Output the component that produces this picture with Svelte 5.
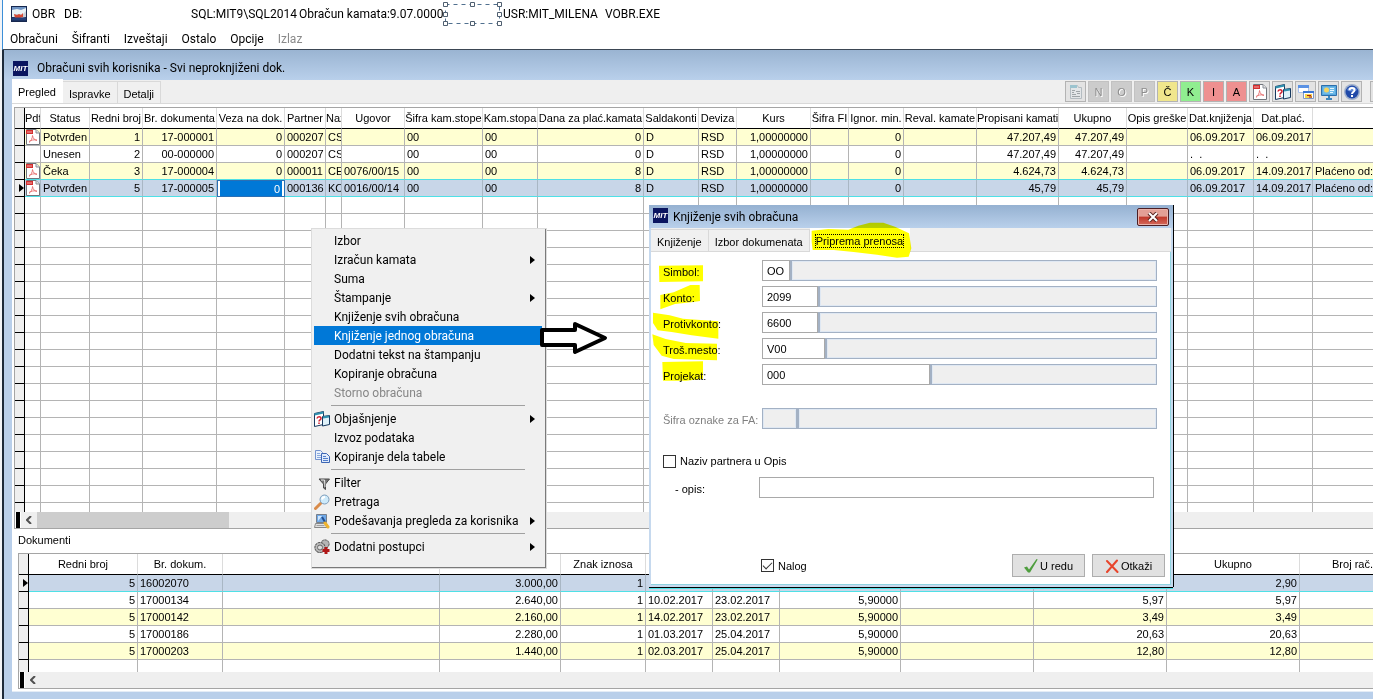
<script lang="ts">
  type Align = 'left' | 'right' | 'center';

  interface Column {
    label: string;
    width: number | null;
    align?: Align;
  }

  interface MenuItem {
    label?: string;
    icon?: string;
    submenu?: boolean;
    disabled?: boolean;
    active?: boolean;
    separator?: boolean;
  }

  const mainMenu = ['Obračuni', 'Šifranti', 'Izveštaji', 'Ostalo', 'Opcije'];

  // A null width takes what is left of the window
  const columns: Column[] = [
    { label: 'Pdf', width: 16 },
    { label: 'Status', width: 49 },
    { label: 'Redni broj', width: 53, align: 'right' },
    { label: 'Br. dokumenta', width: 74, align: 'right' },
    { label: 'Veza na dok.', width: 68, align: 'right' },
    { label: 'Partner', width: 41 },
    { label: 'Naz', width: 16 },
    { label: 'Ugovor', width: 63 },
    { label: 'Šifra kam.stope', width: 78 },
    { label: 'Kam.stopa', width: 55 },
    { label: 'Dana za plać.kamata', width: 106, align: 'right' },
    { label: 'Saldakonti', width: 55 },
    { label: 'Deviza', width: 38 },
    { label: 'Kurs', width: 74, align: 'right' },
    { label: 'Šifra FI', width: 38 },
    { label: 'Ignor. min.', width: 55, align: 'right' },
    { label: 'Reval. kamate', width: 73, align: 'right' },
    { label: 'Propisani kamati', width: 82, align: 'right' },
    { label: 'Ukupno', width: 68, align: 'right' },
    { label: 'Opis greške', width: 61 },
    { label: 'Dat.knjiženja', width: 66 },
    { label: 'Dat.plać.', width: 59 },
    { label: '', width: null }
  ];

  const rows = [
    ['pdf', 'Potvrđen', '1', '17-000001', '0', '000207', 'CS', '', '00', '00', '0', 'D', 'RSD', '1,00000000', '', '0', '', '47.207,49', '47.207,49', '', '06.09.2017', '06.09.2017', ''],
    ['', 'Unesen', '2', '00-000000', '0', '000207', 'CS', '', '00', '00', '0', 'D', 'RSD', '1,00000000', '', '0', '', '47.207,49', '47.207,49', '', '.  .', '.  .', ''],
    ['pdf', 'Čeka', '3', '17-000004', '0', '000011', 'CE', '0076/00/15', '00', '00', '8', 'D', 'RSD', '1,00000000', '', '0', '', '4.624,73', '4.624,73', '', '06.09.2017', '14.09.2017', 'Plaćeno od:'],
    ['pdf', 'Potvrđen', '5', '17-000005', '0', '000136', 'KO', '0016/00/14', '00', '00', '8', 'D', 'RSD', '1,00000000', '', '0', '', '45,79', '45,79', '', '06.09.2017', '14.09.2017', 'Plaćeno od:']
  ];

  const docColumns: Column[] = [
    { label: 'Redni broj', width: 109, align: 'right' },
    { label: 'Br. dokum.', width: 85 },
    { label: '', width: 217 },
    { label: '', width: 121, align: 'right' },
    { label: 'Znak iznosa', width: 85, align: 'right' },
    { label: '', width: 67 },
    { label: '', width: 67 },
    { label: '', width: 121, align: 'right' },
    { label: '', width: 133 },
    { label: '', width: 133, align: 'right' },
    { label: 'Ukupno', width: 133, align: 'right' },
    { label: 'Broj rač.', width: null }
  ];

  const docRows = [
    ['5', '16002070', '', '3.000,00', '1', '', '', '', '', '', '2,90', ''],
    ['5', '17000134', '', '2.640,00', '1', '10.02.2017', '23.02.2017', '5,90000', '', '5,97', '5,97', ''],
    ['5', '17000142', '', '2.160,00', '1', '14.02.2017', '23.02.2017', '5,90000', '', '3,49', '3,49', ''],
    ['5', '17000186', '', '2.280,00', '1', '01.03.2017', '25.04.2017', '5,90000', '', '20,63', '20,63', ''],
    ['5', '17000203', '', '1.440,00', '1', '02.03.2017', '25.04.2017', '5,90000', '', '12,80', '12,80', '']
  ];

  const tools = [
    { icon: 'form' },
    { text: 'N', tone: 'off' },
    { text: 'O', tone: 'off' },
    { text: 'P', tone: 'off' },
    { text: 'Č', tone: 'yellow' },
    { text: 'K', tone: 'green' },
    { text: 'I', tone: 'red' },
    { text: 'A', tone: 'red' },
    { icon: 'pdf' },
    { icon: 'explain' },
    { icon: 'windows' },
    { icon: 'monitor' },
    { icon: 'help' }
  ];

  const contextMenu: MenuItem[] = [
    { label: 'Izbor' },
    { label: 'Izračun kamata', submenu: true },
    { label: 'Suma' },
    { label: 'Štampanje', submenu: true },
    { label: 'Knjiženje svih obračuna' },
    { label: 'Knjiženje jednog obračuna', active: true },
    { label: 'Dodatni tekst na štampanju' },
    { label: 'Kopiranje obračuna' },
    { label: 'Storno obračuna', disabled: true },
    { separator: true },
    { label: 'Objašnjenje', icon: 'explain', submenu: true },
    { label: 'Izvoz podataka' },
    { label: 'Kopiranje dela tabele', icon: 'copy' },
    { separator: true },
    { label: 'Filter', icon: 'filter' },
    { label: 'Pretraga', icon: 'search' },
    { label: 'Podešavanja pregleda za korisnika', icon: 'settings', submenu: true },
    { separator: true },
    { label: 'Dodatni postupci', icon: 'gears', submenu: true }
  ];

  let fields = $state([
    { id: 'simbol', label: 'Simbol:', value: 'OO', width: 28, disabled: false },
    { id: 'konto', label: 'Konto:', value: '2099', width: 56, disabled: false },
    { id: 'protivkonto', label: 'Protivkonto:', value: '6600', width: 56, disabled: false },
    { id: 'mesto', label: 'Troš.mesto:', value: 'V00', width: 63, disabled: false },
    { id: 'projekat', label: 'Projekat:', value: '000', width: 168, disabled: false },
    { id: 'oznaka', label: 'Šifra oznake za FA:', value: '', width: 35, disabled: true }
  ]);

  let veza = $state('0');
  let nazivPartnera = $state(false);
  let opis = $state('');
  let nalog = $state(true);
</script>

{#snippet icon(name: string)}
  <svg class="icon" viewBox="0 0 16 16" width="16" height="16" aria-hidden="true">
    {#if name === 'pdf'}
      <path d="M1.500.500h9.500l3.500 3.500v11.500h-13z" fill="#fff" stroke="#70757c" />
      <path d="M11 .5v3.500h3.500" fill="#e4e4e4" stroke="#8a8f96" />
      <path d="M1 1h7v4H1z" fill="#d32f2f" />
      <path d="M2 3h5" stroke="#f2a9a9" />
      <path d="M4 13.500c2-1.500 3.500-4.500 3.500-7M7.500 6.500c.5 3 2 4.500 4.500 5M4 12.500c2-1.500 5-2 8-1.500" fill="none" stroke="#e87878" />
    {:else if name === 'explain'}
      <path d="M.5 2.500l9-2v13l-9 2z" fill="#fff" stroke="#17395f" />
      <path d="M.5 3.500l9-2" stroke="#2f8fae" stroke-width="2" />
      <path d="M8.500 5.500l7-1v9l-7 1.500z" fill="#dff2fa" stroke="#17395f" />
      <path d="M9 6.500l6-1" stroke="#2f8fae" stroke-width="2" />
      <path d="M3 7.500c.3-2.500 4-2.500 4 0 0 1.400-2 1.300-2 3M5 11.500V13" fill="none" stroke="#d02030" stroke-width="1.500" />
    {:else if name === 'form'}
      <path d="M2.500 1.500h7l1 2h3v11h-11z" fill="#e3e6e8" stroke="#b4bcc1" />
      <path d="M2 1h7v3H2z" fill="#9cc4cf" />
      <path d="M4 6.500h3M4 8.500h2M4 10.500h4M8 7.500h4M9 9.500h3M4 12.500h8" stroke="#9fa5a8" />
    {:else if name === 'windows'}
      <path d="M.5 1.500h10v7H.5z" fill="#fff" stroke="#a9c0ea" />
      <path d="M0 2.500h11" stroke="#5b92e4" stroke-width="3" />
      <path d="M5.500 7.500h10v7h-10z" fill="#fff" stroke="#8298c4" />
      <path d="M5 8h11" stroke="#3b76d4" stroke-width="2" />
      <path d="M7 10h7v4H7z" fill="#f6d54a" />
      <path d="M9 11.500h4M11 13h3" stroke="#a32020" />
    {:else if name === 'monitor'}
      <path d="M.5 1.500h15v10H.5z" fill="#58a9df" stroke="#2c6fab" />
      <path d="M2 3h12v7H2z" fill="#6fbbe8" />
      <circle cx="5.500" cy="6" r="2.500" fill="#f5d35e" />
      <path d="M9 4.500h4M9 6.500h4M9 8.500h3" stroke="#e6f5fd" />
      <path d="M8 12v3M5 15h6" stroke="#3c85bd" stroke-width="2" />
    {:else if name === 'help'}
      <circle cx="8" cy="8" r="8" fill="#9fb0cc" />
      <circle cx="8" cy="8" r="6.500" fill="#2049a8" />
      <path d="M3 6a5.500 5.500 0 0 1 10 0c-3 2-7 2-10 0z" fill="#5d86d6" />
      <path d="M5.500 6.300c0-3 5-3 5 0 0 1.700-2.500 1.700-2.500 3.700M8 11v2" fill="none" stroke="#fff" stroke-width="2" />
    {:else if name === 'copy'}
      <path d="M1.500 1.500h5l2 2v7h-7z" fill="#e9f1fc" stroke="#7594cf" />
      <path d="M3 4.500h3M3 6.500h4M3 8.500h4" stroke="#8aa9dd" />
      <path d="M7.500 4.500h5l3 3v6h-8z" fill="#dfeafb" stroke="#3d66b4" />
      <path d="M9 7.500h3M9 9.500h5M9 11.500h5" stroke="#527ecb" />
    {:else if name === 'filter'}
      <path d="M5 4h10.500l-4 5v5.500l-2-1.500V9z" fill="#777" stroke="#494949" />
      <path d="M7 5h3.500l.5 7" fill="none" stroke="#e6e6e6" />
    {:else if name === 'search'}
      <path d="M1.500 14.500l5-5" stroke="#d98b4a" stroke-width="3" stroke-linecap="round" />
      <circle cx="10.500" cy="5.500" r="4.500" fill="#cdeafa" stroke="#7d9cba" />
      <path d="M8 5.500a3 3 0 0 1 3-2.500" fill="none" stroke="#fff" stroke-width="2" />
    {:else if name === 'settings'}
      <path d="M2.500 1.500h10v8h-10z" fill="#6ea8e8" stroke="#777f8a" />
      <path d="M4 3h4L4 8z" fill="#cfe7ff" />
      <path d="M8 4l3 5" stroke="#234f90" stroke-width="2" />
      <path d="M1.500 10.500h11l1.500 4H.5z" fill="#e0e0e0" stroke="#888" />
      <path d="M2.500 12.500h8" stroke="#a0a0a0" />
      <path d="M11 10l3 4" stroke="#eeb32f" stroke-width="3" stroke-linecap="round" />
    {:else if name === 'gears'}
      <circle cx="11" cy="5" r="4.500" fill="#909090" />
      <circle cx="11" cy="5" r="4" fill="#b5b5b5" stroke="#666" stroke-dasharray="2 1" />
      <circle cx="6" cy="8.500" r="5.500" fill="#8a8a8a" />
      <circle cx="6" cy="8.500" r="5" fill="#b9b9b9" stroke="#555" stroke-dasharray="2 1" />
      <circle cx="6" cy="8.500" r="2.500" fill="#dcdcdc" stroke="#666" />
      <path d="M12 8v7M8.500 11.500h7" stroke="#b01717" stroke-width="3" />
    {/if}
  </svg>
{/snippet}

{#snippet grid(cols: Column[], data: string[][], selected: number, blanks: number)}
  <table class="grid">
    <colgroup>
      <col class="marker-col" />
      {#each cols as col}
        <col style={col.width ? `width: ${col.width}px` : ''} />
      {/each}
    </colgroup>
    <thead>
      <tr>
        <th class="marker"></th>
        {#each cols as col}
          <th class:last={col.width === null}>{col.label}</th>
        {/each}
      </tr>
    </thead>
    <tbody>
      {#each data as row, i}
        <tr class:striped={i % 2 === 0} class:selected={i === selected}>
          <td class="marker">
            {#if i === selected}
              <svg viewBox="0 0 5 8" width="5" height="8" aria-hidden="true"><path d="M0 0l5 4-5 4z" /></svg>
            {/if}
          </td>
          {#each row as value, c}
            <td class={cols[c].align ?? 'left'} class:pdf={cols[c].label === 'Pdf'} class:edit={i === selected && cols[c].label === 'Veza na dok.'}>
              {#if value === 'pdf'}
                {@render icon('pdf')}
              {:else if i === selected && cols[c].label === 'Veza na dok.'}
                <input aria-label="Veza na dok." bind:value={veza} />
              {:else}
                {value}
              {/if}
            </td>
          {/each}
        </tr>
      {/each}
      {#each Array(blanks + 1) as _, i}
        <tr class:stub={i === blanks}>
          <td class="marker"></td>
          {#each cols as _col}
            <td></td>
          {/each}
        </tr>
      {/each}
    </tbody>
  </table>
{/snippet}

<div class="app">
  <header class="app-head">
    <div class="caption">
      <svg class="app-icon" viewBox="0 0 16 16" width="16" height="16" aria-hidden="true">
        <path d="M0 0h16v16H0z" fill="#17284f" />
        <path d="M1 1h14v4H1z" fill="#6f94c4" />
        <path d="M1 4l5-1 4 1 5-2v9H1z" fill="#e9f1f6" />
        <path d="M3 8h9l3-3v6l-4 1H4z" fill="#c9ced6" />
        <path d="M3 8l3 1 2-1 2 1 2-2v4l-3 1H4z" fill="#d84a35" />
        <path d="M1 13h14" stroke="#24407a" stroke-width="3" />
      </svg>
      <span class="cap-name">OBR</span>
      <span class="cap-db">DB:</span>
      <span class="cap-sql">SQL:MIT9\SQL2014</span>
      <span class="cap-version">Obračun kamata:9.07.0000</span>
      <svg class="placeholder" viewBox="0 0 60 24" width="60" height="24" aria-hidden="true">
        <path d="M2.500 2.500h54v19h-54z" fill="none" stroke="#51708f" stroke-dasharray="4 4" />
        <g fill="#fff" stroke="#4f5f70">
          <path d="M.5.500h4v4h-4zM27.500.500h4v4h-4zM54.500.500h4v4h-4z" />
          <path d="M.5 10.500h4v4h-4zM54.500 10.500h4v4h-4z" />
          <path d="M.5 19.500h4v4h-4zM27.500 19.500h4v4h-4zM54.500 19.500h4v4h-4z" />
        </g>
      </svg>
      <span class="cap-user">USR:MIT_MILENA</span>
      <span>VOBR.EXE</span>
    </div>
    <nav class="menubar">
      {#each mainMenu as entry}
        <button>{entry}</button>
      {/each}
      <button disabled>Izlaz</button>
    </nav>
  </header>

  <main class="child">
    <div class="child-title">
      <span class="mit">MIT</span>
      <h1>Obračuni svih korisnika - Svi neproknjiženi dok.</h1>
    </div>

    <div class="panel">
      <div class="strip">
        <div class="tabs">
          <button class="tab current">Pregled</button>
          <button class="tab">Ispravke</button>
          <button class="tab">Detalji</button>
        </div>
        <div class="tools">
          {#each tools as tool}
            <button class="tool {tool.tone ?? ''}" aria-label={tool.text ?? tool.icon}>
              {#if tool.icon}{@render icon(tool.icon)}{:else}{tool.text}{/if}
            </button>
          {/each}
          <button class="tool cut" aria-label="more"></button>
        </div>
      </div>

      <section class="frame">
        {@render grid(columns, rows, 3, 18)}
        <div class="scroll">
          <span class="split"></span>
          <button class="scroll-left" aria-label="scroll left">
            <svg viewBox="0 0 6 8" width="6" height="8" aria-hidden="true"><path d="M5 0L1 4l4 4" fill="none" stroke="#505050" stroke-width="2" /></svg>
          </button>
          <span class="thumb"></span>
        </div>
      </section>

      <h2>Dokumenti</h2>

      <section class="frame docs">
        {@render grid(docColumns, docRows, 0, 0)}
        <div class="scroll">
          <span class="split"></span>
          <button class="scroll-left" aria-label="scroll left">
            <svg viewBox="0 0 6 8" width="6" height="8" aria-hidden="true"><path d="M5 0L1 4l4 4" fill="none" stroke="#505050" stroke-width="2" /></svg>
          </button>
        </div>
      </section>
    </div>
  </main>

  <div class="context" role="menu">
    {#each contextMenu as item}
      {#if item.separator}
        <hr />
      {:else}
        <button class="item" class:active={item.active} role="menuitem" disabled={item.disabled}>
          <span class="item-icon">{#if item.icon}{@render icon(item.icon)}{/if}</span>
          <span class="item-label">{item.label}</span>
          {#if item.submenu}
            <svg viewBox="0 0 5 8" width="5" height="8" aria-hidden="true"><path d="M0 0l5 4-5 4z" /></svg>
          {/if}
        </button>
      {/if}
    {/each}
  </div>

  <svg class="pointer" viewBox="0 0 70 34" width="70" height="34" aria-hidden="true">
    <path d="M2 9h33V3l30 14-30 14v-7H2z" fill="#fff" stroke="#000" stroke-width="4" stroke-linejoin="round" />
  </svg>

  <div class="dialog" role="dialog" aria-labelledby="dialog-title">
    <div class="dialog-title">
      <span class="mit">MIT</span>
      <span id="dialog-title">Knjiženje svih obračuna</span>
      <button class="close" aria-label="close">
        <svg viewBox="0 0 12 10" width="12" height="10" aria-hidden="true">
          <path d="M2 1l8 8M10 1L2 9" stroke="#5b2420" stroke-width="4" />
          <path d="M2 1l8 8M10 1L2 9" stroke="#fff" stroke-width="2" />
        </svg>
      </button>
    </div>
    <div class="dialog-tabs">
      <button class="tab">Knjiženje</button>
      <button class="tab">Izbor dokumenata</button>
      <button class="tab current"><span>Priprema prenosa</span></button>
    </div>

    <form class="dialog-body">
      {#each fields as field}
        <div class="field" class:disabled={field.disabled}>
          <label for={field.id}>{field.label}</label>
          <input id={field.id} class="code" style="width: {field.width}px" disabled={field.disabled} bind:value={field.value} />
          <input class="name" aria-label="{field.label} naziv" readonly />
        </div>
      {/each}

      <label class="check naziv"><input type="checkbox" bind:checked={nazivPartnera} />Naziv partnera u Opis</label>
      <div class="opis">
        <label for="opis">- opis:</label>
        <input id="opis" bind:value={opis} />
      </div>

      <div class="actions">
        <label class="check"><input type="checkbox" bind:checked={nalog} />Nalog</label>
        <div class="buttons">
          <button type="button">
            <svg viewBox="0 0 14 14" width="14" height="14" aria-hidden="true"><path d="M0 8.500l3-1 2 3L12.500 0l1.200.5L6 13.500H4z" fill="#4f9e3f" /></svg>
            U redu
          </button>
          <button type="button">
            <svg viewBox="0 0 14 14" width="14" height="14" aria-hidden="true"><path d="M2 2l10.500 11M12 1.500L2 13" fill="none" stroke="#e8452c" stroke-width="2" stroke-linecap="round" /></svg>
            Otkaži
          </button>
        </div>
      </div>
    </form>

    <svg class="marks" viewBox="12 15 810 555" width="270" height="185" aria-hidden="true">
      <g fill="#ff0">
        <path d="M500 92l50-5 60 2 30-12 35-9h40l35 12 42 20 7 45-8 25-35 3-60-9-70-8-60-6h-63l-3-25z" />
        <path d="M42 197l132-1v48l-131 2z" />
        <path d="M46 285l40-8 50-22h28l1 48-20 3-55 6-44 16z" />
        <path d="M24 338l50 8 40 10 106 8v52l-80-10-60-10-42-5-14-22z" />
        <path d="M22 403l40 14 60 12 94 2v50l-130-4-36-10-24-32z" />
        <path d="M52 486l122-2v52l-50 6H54z" />
      </g>
    </svg>
  </div>
</div>

<style>
  :global(body) {
    overflow-x: hidden;
  }

  .app {
    --grid-font: 'Liberation Sans', Arial, sans-serif;
    --ui-font: Roboto, 'Open Sans', sans-serif;
    --line: #b4b4b4;
    position: relative;
    display: flex;
    flex-direction: column;
    min-height: 100vh;
    box-sizing: border-box;
    overflow: hidden;
    padding-left: 2px;
    background: #f2f4f7;
    color: #000;
    font: 12px/16px var(--ui-font);
  }

  .app *,
  .app *::before {
    box-sizing: border-box;
  }

  button,
  input {
    margin: 0;
    padding: 0;
    border: 0;
    border-radius: 0;
    background: none;
    color: inherit;
    font: inherit;
  }

  button svg,
  .app-icon {
    flex-shrink: 0;
  }

  .app-head {
    border-left: 1px solid #3c8fd8;
    border-bottom: 1px solid #3b4654;
    background: #fff;
  }

  .caption {
    display: flex;
    align-items: center;
    height: 28px;
    padding-left: 8px;
    white-space: nowrap;
  }

  .cap-name {
    width: 32px;
    margin-left: 5px;
  }

  .cap-db {
    width: 127px;
  }

  .cap-sql {
    width: 108px;
  }

  .cap-version {
    width: 144px;
  }

  .cap-user {
    width: 102px;
  }

  .menubar {
    display: flex;
    gap: 14px;
    height: 21px;
    padding-left: 7px;
  }

  .menubar button:disabled {
    color: #8a8a8a;
  }

  .child {
    flex: 1;
    padding: 0 0 7px 8px;
    border-left: 2px solid #1d2a3a;
    background: #b9cfea;
  }

  .child-title {
    display: flex;
    align-items: center;
    gap: 9px;
    height: 30px;
    margin-left: -8px;
    padding: 6px 0 0 9px;
    background: linear-gradient(#9ab4d2, #b9d0eb);
  }

  h1,
  h2 {
    margin: 0;
    font: inherit;
  }

  .mit {
    width: 15px;
    height: 15px;
    background: #0a1560;
    color: #fff;
    font: italic bold 8px/15px 'Liberation Sans', sans-serif;
    text-align: center;
  }

  .panel {
    padding-bottom: 2px;
    background: #fff;
    border-bottom: 1px solid #e4ecf6;
    font: 11px/16px var(--grid-font);
  }

  .strip {
    display: flex;
    justify-content: space-between;
    height: 24px;
    background: #efefef;
    border-bottom: 1px solid #d9d9d9;
  }

  .tabs,
  .dialog-tabs {
    display: flex;
    align-items: flex-end;
  }

  .tab {
    height: 22px;
    padding: 2px 6px 0;
    border: 1px solid #d9d9d9;
    border-left: 0;
    border-bottom: 0;
    background: #f0f0f0;
  }

  .tab.current {
    height: 24px;
    padding-bottom: 2px;
    background: #fff;
    border-color: #fff;
  }

  .tools {
    display: flex;
    gap: 2px;
    padding-top: 1px;
  }

  .tool {
    display: flex;
    align-items: center;
    justify-content: center;
    width: 21px;
    height: 21px;
    border: 1px solid #b3b3b3;
    background: #e3e3e3;
    font: 11px/16px 'Liberation Sans', sans-serif;
  }

  .tool.off {
    background: #cccccc;
    border-color: #c2c2c2;
    color: #8d8d8d;
    text-shadow: 1px 1px #fff;
  }

  .tool.yellow {
    background: #f0e68c;
  }

  .tool.green {
    background: #90ee90;
  }

  .tool.red {
    background: #ee9090;
  }

  .tool.cut {
    width: 3px;
    margin-left: 6px;
    border-right: 0;
  }

  .frame {
    margin: 3px 0 0 2px;
    border: 1px solid #a5a5a5;
    border-right: 0;
  }

  .frame.docs {
    margin: 0 0 0 6px;
  }

  .grid {
    width: 100%;
    table-layout: fixed;
    border-collapse: separate;
    border-spacing: 0;
  }

  .marker-col {
    width: 10px;
  }

  th,
  td {
    height: 17px;
    padding: 0 0 0 2px;
    border-right: 1px solid var(--line);
    border-bottom: 1px solid var(--line);
    overflow: hidden;
    white-space: pre;
    line-height: 16px;
    text-align: left;
  }

  th {
    height: 21px;
    padding: 0;
    border-right-color: #dcdcdc;
    border-bottom-color: #000;
    font-weight: normal;
    text-align: center;
  }

  th.last {
    text-align: right;
  }

  td.right {
    padding: 0 2px 0 0;
    text-align: right;
  }

  th:last-child,
  td:last-child {
    border-right: 0;
  }

  .striped td {
    background: #ffffd2;
  }

  .selected td {
    background: #c8d6e8;
    border-right-color: #a9b7c4;
    border-bottom-color: #4fe0e6;
  }

  tr:has(+ .selected) td {
    border-bottom-color: #4fe0e6;
  }

  .grid .marker {
    padding: 0;
    border-right: 1px solid #000;
    border-bottom-color: #000;
    background: #efefef;
    text-align: right;
  }

  td.marker svg {
    display: block;
    margin-left: auto;
  }

  td.pdf {
    padding: 0;
  }

  td.pdf .icon {
    display: block;
  }

  .selected td.edit {
    padding: 0 2px;
    border: 1px solid #2a6fb5;
    background: #fff;
  }

  .edit input {
    display: block;
    width: 100%;
    height: 15px;
    padding-right: 2px;
    background: #0078d7;
    color: #fff;
    text-align: right;
  }

  .stub td {
    height: 9px;
    border-bottom: 0;
  }

  .grid .stub .marker {
    border-bottom: 0;
  }

  .docs .stub td {
    height: 12px;
  }

  .scroll {
    display: flex;
    height: 16px;
    background: #efefef;
  }

  .split {
    width: 6px;
    border: 1px solid #fff;
    border-width: 0 1px;
    background: #000;
  }

  .scroll-left {
    display: flex;
    align-items: center;
    justify-content: center;
    width: 16px;
  }

  .thumb {
    width: 192px;
    background: #cdcdcd;
  }

  h2 {
    height: 24px;
    padding: 3px 0 0 6px;
  }

  .context {
    position: absolute;
    left: 311px;
    top: 228px;
    width: 236px;
    padding: 2px 3px 11px 2px;
    border: 1px solid #fff;
    border-right: 2px solid #7a7a7a;
    border-bottom: 2px solid #7a7a7a;
    outline: 1px solid #dcdcdc;
    outline-offset: -1px;
    background: #f0f0f0;
  }

  .item {
    display: flex;
    align-items: center;
    width: 100%;
    height: 19px;
    padding-right: 7px;
    text-align: left;
    white-space: nowrap;
  }

  .item-icon {
    width: 20px;
    height: 16px;
  }

  .item-label {
    flex: 1;
  }

  .item.active {
    background: #0078d7;
    color: #fff;
  }

  .item:disabled {
    color: #868686;
  }

  hr {
    height: 1px;
    margin: 3px 17px;
    border: 0;
    background: #a0a0a0;
  }

  .pointer {
    position: absolute;
    left: 540px;
    top: 321px;
  }

  .dialog {
    position: absolute;
    left: 649px;
    top: 205px;
    width: 524px;
    border: solid #c6d9ee;
    border-width: 0 2px 2px;
    background: #fff;
    box-shadow: inset -1px -1px #8fd4e0, 0 1px #000, 1px 0 #000, 0 2px #4fe0e6;
    font: 11px/16px var(--grid-font);
  }

  .dialog-title {
    display: flex;
    align-items: center;
    gap: 5px;
    height: 23px;
    margin: 0 -2px;
    padding: 0 4px;
    background: linear-gradient(#95b1d1, #b9d0eb);
    font: 12px/16px var(--ui-font);
  }

  .dialog-title .mit {
    margin-bottom: 2px;
  }

  .close {
    display: flex;
    align-items: center;
    justify-content: center;
    width: 32px;
    height: 18px;
    margin-left: auto;
    border: 1px solid #4c1f24;
    border-radius: 2px;
    background: linear-gradient(#e3a096 45%, #c1392b 50%, #d3695b);
    box-shadow: inset 0 0 0 1px #e9b3ab;
  }

  .dialog-tabs {
    height: 24px;
    background: #efefef;
    border-bottom: 1px solid #d9d9d9;
  }

  .dialog-tabs .current {
    height: 24px;
    margin-bottom: -1px;
  }

  .dialog-tabs .current span {
    outline: 1px dotted #000;
  }

  .dialog-body {
    padding: 8px 14px 8px 12px;
  }

  .field {
    display: flex;
    margin-bottom: 5px;
  }

  .field label {
    width: 99px;
    padding-top: 4px;
    white-space: nowrap;
  }

  .field.disabled {
    margin-top: 23px;
    color: #808080;
  }

  .code,
  .name,
  .opis input {
    height: 21px;
    padding-left: 4px;
    border: 1px solid #a9a9a9;
    background: #fff;
  }

  .name,
  .code:disabled {
    background: #efefef;
    border: 1px solid #a3b1c4;
    box-shadow: inset 0 0 0 1px #dfe8f3;
  }

  .name {
    flex: 1;
    min-width: 0;
    border-left-width: 2px;
  }

  .check {
    display: flex;
    align-items: center;
    gap: 4px;
  }

  .check input {
    appearance: none;
    width: 13px;
    height: 13px;
    border: 1px solid #333;
    background: #fff;
  }

  .check input:checked::before {
    content: '';
    display: block;
    width: 9px;
    height: 5px;
    margin: 2px 1px;
    border: solid #333;
    border-width: 0 0 1px 1px;
    transform: rotate(-45deg);
  }

  .naziv {
    margin-top: 24px;
  }

  .opis {
    display: flex;
    margin: 8px 3px 0 12px;
  }

  .opis label {
    width: 84px;
    padding-top: 4px;
  }

  .opis input {
    flex: 1;
  }

  .actions {
    display: flex;
    align-items: center;
    justify-content: space-between;
    margin: 56px -8px 0 98px;
  }

  .buttons {
    display: flex;
    gap: 7px;
  }

  .buttons button {
    display: flex;
    align-items: center;
    justify-content: center;
    gap: 2px;
    width: 73px;
    height: 23px;
    border: 1px solid #adadad;
    background: #e1e1e1;
  }

  .marks {
    position: absolute;
    left: -2px;
    top: 0;
    mix-blend-mode: multiply;
    pointer-events: none;
  }
</style>
